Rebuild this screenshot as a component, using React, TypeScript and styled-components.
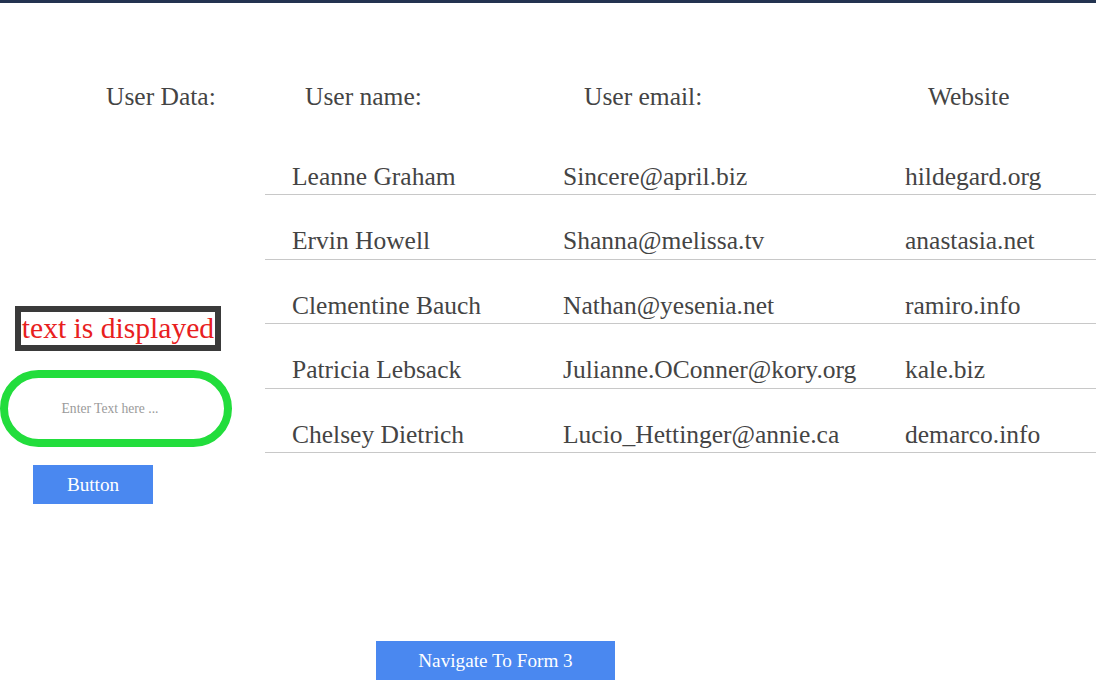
import React from "react";
import styled, { createGlobalStyle } from "styled-components";

const Global = createGlobalStyle`
  html, body { margin: 0; padding: 0; background: #ffffff; }
  body { font-family: "Liberation Serif", "Times New Roman", serif; color: #444; }
`;

const TopBar = styled.div`
  height: 3px;
  background: #233350;
`;

const Main = styled.div`
  display: flex;
  align-items: flex-start;
`;

const Left = styled.div`
  width: 265px;
  flex: none;
  display: flex;
  flex-direction: column;
  align-items: flex-start;
`;

const Title = styled.div<{ $indent: number }>`
  font-size: 25.5px;
  line-height: 28px;
  margin-top: 80px;
  padding-left: ${(p) => p.$indent}px;
  color: #444;
  white-space: nowrap;
`;

const DisplayBox = styled.div`
  margin-top: 195px;
  margin-left: 15px;
  width: 206px;
  height: 45px;
  box-sizing: border-box;
  border: 6px solid #3a3a3a;
  display: flex;
  align-items: center;
  justify-content: center;
  color: #e8201e;
  font-size: 29.6px;
  white-space: nowrap;
`;

const PillInput = styled.input`
  margin-top: 19px;
  width: 232px;
  height: 77px;
  box-sizing: border-box;
  border: 8px solid #22dd3c;
  border-radius: 40px;
  outline: none;
  text-align: center;
  font-family: "Liberation Serif", serif;
  font-size: 13.6px;
  padding: 0 12px 0 0;
  &::placeholder { color: #9a9a9a; }
`;

const BlueButton = styled.button<{ $w: number }>`
  width: ${(p) => p.$w}px;
  height: 39px;
  background: #4a88f0;
  border: none;
  color: #ffffff;
  font-family: "Liberation Serif", serif;
  font-size: 19.2px;
  padding: 0;
  cursor: pointer;
`;

const SmallButtonWrap = styled.div`
  margin-top: 18px;
  margin-left: 33px;
`;

const Right = styled.div`
  flex: 1;
  display: flex;
  flex-direction: column;
`;

const Grid = styled.div`
  display: grid;
  grid-template-columns: 271px 342px 1fr;
`;

const HeaderRow = styled(Grid)`
  margin-top: 80px;
  height: 28px;
`;

const HeaderCell = styled.div<{ $indent: number }>`
  font-size: 25.5px;
  line-height: 28px;
  padding-left: ${(p) => p.$indent}px;
  white-space: nowrap;
`;

const Table = styled.div`
  margin-top: 19.5px;
  display: flex;
  flex-direction: column;
`;

const Row = styled(Grid)`
  height: 64.5px;
  box-sizing: border-box;
  border-bottom: 1px solid #c8c8c8;
  align-items: end;
  padding-bottom: 3.5px;
`;

const Cell = styled.div`
  padding-left: 27px;
  font-size: 25.5px;
  line-height: 28px;
  white-space: nowrap;
`;

const Footer = styled.div`
  margin-top: 137px;
  padding-left: 376px;
`;

const users = [
  ["Leanne Graham", "Sincere@april.biz", "hildegard.org"],
  ["Ervin Howell", "Shanna@melissa.tv", "anastasia.net"],
  ["Clementine Bauch", "Nathan@yesenia.net", "ramiro.info"],
  ["Patricia Lebsack", "Julianne.OConner@kory.org", "kale.biz"],
  ["Chelsey Dietrich", "Lucio_Hettinger@annie.ca", "demarco.info"],
];

export default function App() {
  return (
    <>
      <Global />
      <TopBar />
      <Main>
        <Left>
          <Title $indent={106}>User Data:</Title>
          <DisplayBox>text is displayed</DisplayBox>
          <PillInput placeholder="Enter Text here ..." />
          <SmallButtonWrap>
            <BlueButton $w={120}>Button</BlueButton>
          </SmallButtonWrap>
        </Left>
        <Right>
          <HeaderRow>
            <HeaderCell $indent={40}>User name:</HeaderCell>
            <HeaderCell $indent={48}>User email:</HeaderCell>
            <HeaderCell $indent={50}>Website</HeaderCell>
          </HeaderRow>
          <Table>
            {users.map((u) => (
              <Row key={u[0]}>
                <Cell>{u[0]}</Cell>
                <Cell>{u[1]}</Cell>
                <Cell>{u[2]}</Cell>
              </Row>
            ))}
          </Table>
        </Right>
      </Main>
      <Footer>
        <BlueButton $w={239}>Navigate To Form 3</BlueButton>
      </Footer>
    </>
  );
}
